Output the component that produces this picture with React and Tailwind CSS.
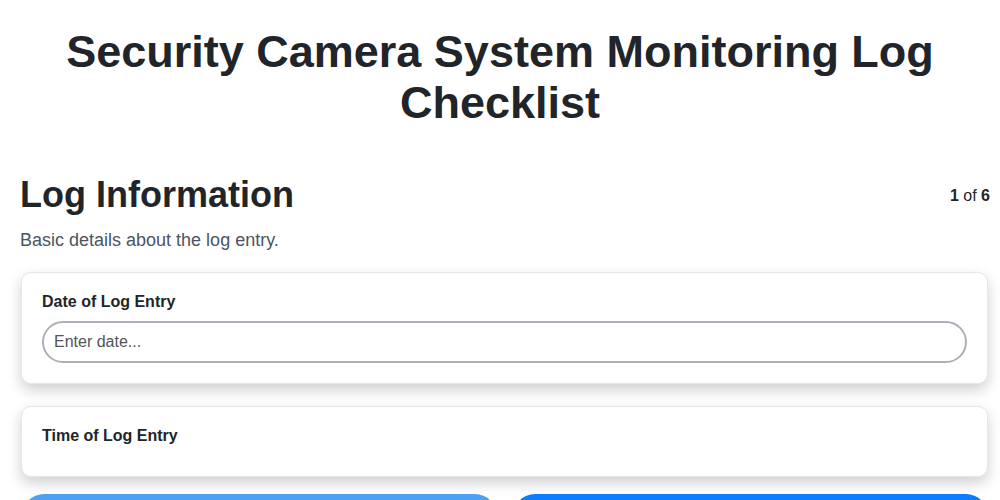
export default function App() {
  const font = { fontFamily: '"Liberation Sans", Arial, sans-serif' };
  return (
    <div className="h-[500px] overflow-hidden bg-white text-[#212529]" style={font}>
      <h1 className="px-[60px] pt-[26px] text-center text-[45px] font-bold leading-[51px]">
        Security Camera System Monitoring Log Checklist
      </h1>
      <div className="pl-5 pr-[10px]">
        <div className="mt-[46px] flex items-start justify-between">
          <h2 className="text-[36px] font-bold leading-[42px]">Log Information</h2>
          <div className="mt-[10px] text-[16px]">
            <span className="font-bold">1</span> of <span className="font-bold">6</span>
          </div>
        </div>
        <p className="mt-[12px] text-[18px] text-[#4b5563] leading-[24px]">Basic details about the log entry.</p>
        <div className="mt-[20px] flex flex-col gap-[22px] pl-[1px] pr-[2px]">
          <div className="rounded-[10px] border border-[#e5e7eb] bg-white px-5 pt-[19px] pb-[20px] shadow-[0_6px_14px_rgba(20,20,40,0.2)]">
            <div className="text-[16px] font-bold leading-[20px]">Date of Log Entry</div>
            <input
              className="mt-[9px] h-[42px] w-full rounded-full border-2 border-[#aab1ba] px-[10px] text-[16px] text-[#333] outline-none placeholder:text-[#555]"
              placeholder="Enter date..."
              style={font}
            />
          </div>
          <div className="h-[71px] rounded-[10px] border border-[#e5e7eb] bg-white px-5 pt-[19px] shadow-[0_6px_14px_rgba(20,20,40,0.2)]">
            <div className="text-[16px] font-bold leading-[20px]">Time of Log Entry</div>
          </div>
        </div>
        <div className="mt-[17px] flex gap-4 pl-[2px] pr-[2px]">
          <button className="h-[44px] flex-1 rounded-full bg-[#4da1f5] text-white text-[16px] font-bold">Previous</button>
          <button className="h-[44px] flex-1 rounded-full bg-[#0a7dff] text-white text-[16px] font-bold">Next</button>
        </div>
      </div>
    </div>
  );
}
